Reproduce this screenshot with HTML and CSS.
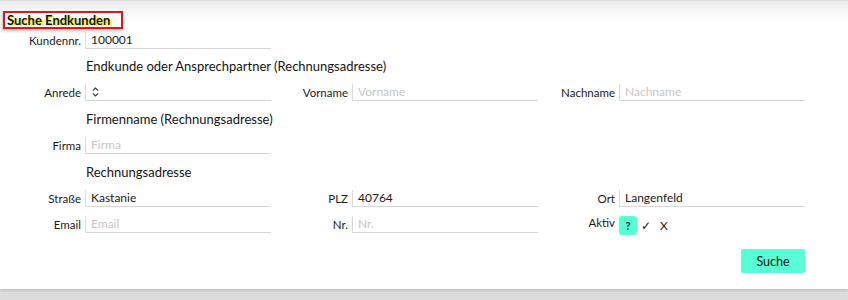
FILE: index.html
```html
<!DOCTYPE html>
<html lang="de">
<head>
<meta charset="utf-8">
<link rel="stylesheet" href="styles.css">
</head>
<body>
<div class="card">
  <div class="title"><span>Suche Endkunden</span></div>
  <div class="form">
    <label class="lbl">Kundennr.</label>
    <div class="inp">100001</div>
    <div class="span4"></div>

    <div></div>
    <div class="head">Endkunde oder Ansprechpartner (Rechnungsadresse)</div>

    <label class="lbl">Anrede</label>
    <div class="inp sel"><svg width="7" height="10" viewBox="0 0 7 10"><path d="M0.8 3.6 L3.5 1 L6.2 3.6 M0.8 6.4 L3.5 9 L6.2 6.4" fill="none" stroke="#333" stroke-width="1.1"/></svg></div>
    <label class="lbl">Vorname</label>
    <div class="inp ph">Vorname</div>
    <label class="lbl">Nachname</label>
    <div class="inp ph">Nachname</div>

    <div></div>
    <div class="head">Firmenname (Rechnungsadresse)</div>

    <label class="lbl">Firma</label>
    <div class="inp ph">Firma</div>
    <div class="span4"></div>

    <div></div>
    <div class="head">Rechnungsadresse</div>

    <label class="lbl">Straße</label>
    <div class="inp">Kastanie</div>
    <label class="lbl">PLZ</label>
    <div class="inp">40764</div>
    <label class="lbl">Ort</label>
    <div class="inp">Langenfeld</div>

    <label class="lbl">Email</label>
    <div class="inp ph">Email</div>
    <label class="lbl">Nr.</label>
    <div class="inp ph">Nr.</div>
    <label class="lbl aktiv">Aktiv</label>
    <div class="tri">
      <span class="opt on">?</span>
      <span class="opt">✓</span>
      <span class="opt">X</span>
    </div>
  </div>
  <div class="actions"><button class="btn">Suche</button></div>
</div>
</body>
</html>
```
FILE: styles.css
```css
html, body {
  margin: 0;
  padding: 0;
}
body {
  background: #dcdcdc;
  font-family: Lato, "Open Sans", "Liberation Sans", sans-serif;
  font-size: 12px;
  color: #1a1a1a;
  width: 848px;
  height: 300px;
  overflow: hidden;
}
.card {
  background: linear-gradient(#c9c9c9 0, #ececec 1px, #fafafa 14px, #ffffff 24px);
  height: 289px;
  box-sizing: border-box;
  padding-top: 11px;
  box-shadow: 0 1px 3px rgba(0,0,0,0.18);
}
.title {
  display: inline-block;
  margin-left: 3px;
  border: 2px solid #e3141b;
  height: 14px;
  width: 116px;
  box-shadow: -1px 2px 3px rgba(0,0,0,0.25);
  line-height: 14px;
}
.title span {
  font-weight: 700;
  font-size: 13px;
  padding-left: 2px;
  color: #111;
  text-shadow: 2px 1px 1px #f0f000;
}
.form {
  display: grid;
  grid-template-columns: 81px 186px 73px 186px 73px 186px;
  column-gap: 4px;
  grid-template-rows: 22px 30px 22px 31px 22px 31px 22px 30px;
  align-items: center;
  width: 805px;
  margin-top: 0;
}
.span4 { grid-column: span 4; }
.head {
  grid-column: 2 / span 5;
  font-size: 13px;
  padding-left: 1px;
  color: #141414;
}
.lbl {
  text-align: right;
  font-size: 11.5px;
  color: #1a1a1a;
}
.lbl.aktiv { align-self: center; margin-top: -4px; }
.inp {
  height: 16px;
  line-height: 16px;
  border-left: 1px solid #dcdcdc;
  border-bottom: 1px solid #d6d6d6;
  padding-left: 5px;
  font-size: 12px;
  color: #1a1a1a;
}
.inp.ph { color: #c6c6c6; }
.sel { display: flex; align-items: center; padding-left: 6px; }
.tri {
  display: flex;
  align-items: center;
  gap: 0;
  margin-top: 3px;
}
.opt {
  width: 18px;
  height: 19px;
  display: flex;
  align-items: center;
  justify-content: center;
  font-size: 12px;
  color: #222;
}
.opt.on {
  background: #56ffd4;
  border-radius: 3px;
  font-weight: 700;
  font-size: 11px;
}
.actions {
  width: 805px;
  display: flex;
  justify-content: flex-end;
  margin-top: 10px;
}
.btn {
  width: 64px;
  height: 24px;
  border: none;
  border-radius: 2px;
  background: #56ffd4;
  font-family: Lato, "Open Sans", "Liberation Sans", sans-serif;
  font-size: 12.5px;
  color: #111;
  padding: 0;
}
```
